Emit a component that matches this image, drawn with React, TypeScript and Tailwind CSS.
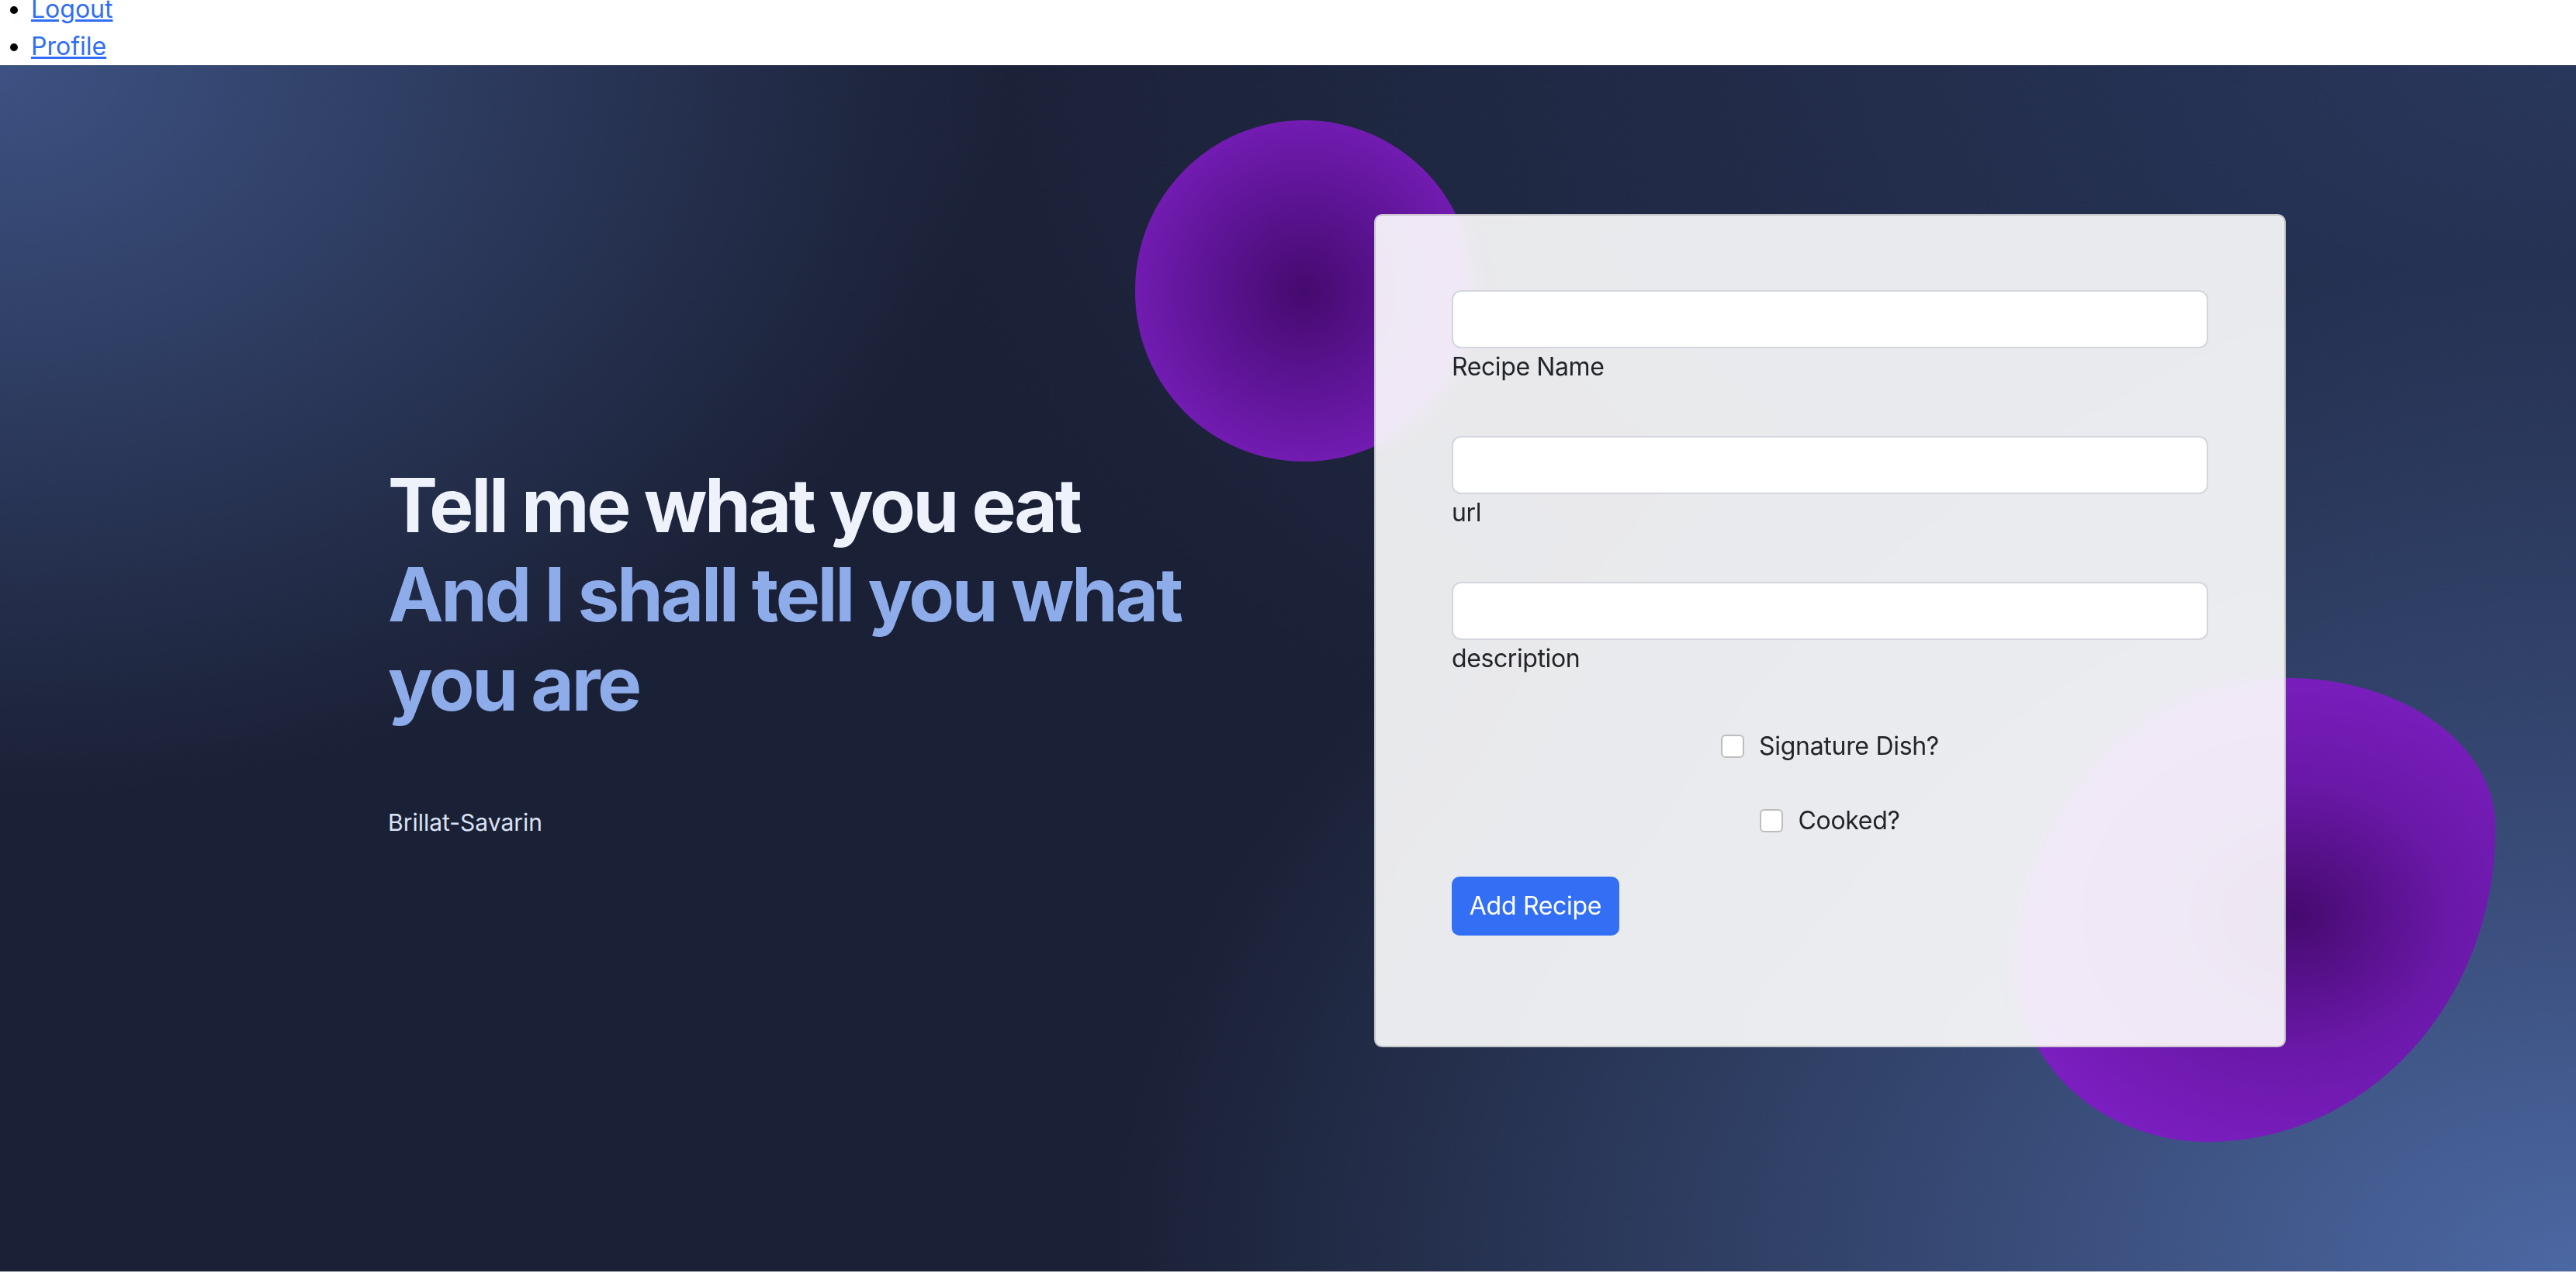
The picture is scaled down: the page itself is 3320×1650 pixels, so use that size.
import { useState } from 'react';

const font = { fontFamily: 'Inter, "Noto Sans", sans-serif' };

function Field({ label }: { label: string }) {
  return (
    <div className="mb-[65px]">
      <input
        type="text"
        className="block h-[75px] w-full rounded-[12px] border-2 border-[#d3d6dc] bg-white px-6 text-[32px] outline-none"
      />
      <label className="block text-[32px] leading-[48px] tracking-[-0.4px] text-[#212529]">{label}</label>
    </div>
  );
}

function Check({ label, checked, onChange }: { label: string; checked: boolean; onChange: () => void }) {
  return (
    <div className="flex h-[48px] items-center justify-center gap-[19px]">
      <input
        type="checkbox"
        checked={checked}
        onChange={onChange}
        className="h-[30px] w-[30px] appearance-none rounded-[6px] border-2 border-[#bdbdbd] bg-white checked:border-[#336ff5] checked:bg-[#336ff5]"
      />
      <label className="text-[32px] leading-[48px] tracking-[-0.3px] text-[#212529]">{label}</label>
    </div>
  );
}

export default function App() {
  const [signature, setSignature] = useState(false);
  const [cooked, setCooked] = useState(false);

  return (
    <div className="min-h-screen bg-white" style={font}>
      <ul className="-mt-[12px] list-disc pl-[40px] text-[32px] leading-[48px]">
        <li>
          <a href="#" className="text-[#2f6ef5] underline">Logout</a>
        </li>
        <li>
          <a href="#" className="text-[#2f6ef5] underline">Profile</a>
        </li>
      </ul>

      <section className="relative flex h-[1555px] items-start overflow-hidden bg-[#1a2035] bg-[image:radial-gradient(ellipse_1300px_950px_at_0%_0%,#3d5283_0%,rgba(61,82,131,0)_100%),radial-gradient(ellipse_1900px_1300px_at_100%_100%,#4c68a3_0%,rgba(76,104,163,0)_100%),radial-gradient(ellipse_2200px_1200px_at_100%_0%,#29375c_0%,rgba(41,55,92,0)_100%)] pl-[500px]">
        {/* blobs behind the card */}
        <div className="absolute left-[1463px] top-[71px] h-[440px] w-[436px] rounded-full bg-[radial-gradient(circle_at_50%_50%,#450a6e_0%,#5a1390_35%,#8522cc_100%)]" />
        <div className="absolute left-[2600px] top-[790px] h-[598px] w-[616px] rounded-[348px_267px_370px_245px/376px_191px_402px_222px] bg-[radial-gradient(ellipse_at_58%_51%,#450a6e_0%,#6a18a8_40%,#8623d0_100%)]" />

        <div className="relative w-[1100px] pt-[510px]">
          <h1 className="text-[96px] font-bold leading-[115px] tracking-[-3.3px]">
            <span className="block text-[#eef2fb]">Tell me what you eat</span>
            <span className="block text-[#8eacea]">And I shall tell you what you are</span>
          </h1>
          <p className="mt-[100px] text-[30px] leading-[42px] text-[#dbe3f6]">Brillat-Savarin</p>
        </div>

        <form
          className="relative ml-[171px] mt-[192px] w-[1175px] rounded-[10px] border-2 border-black/15 bg-white/90 px-[98px] pb-[142px] pt-[96px] backdrop-blur-md"
          onSubmit={(e) => e.preventDefault()}
        >
          <Field label="Recipe Name" />
          <Field label="url" />
          <Field label="description" />
          <div className="mb-[48px]">
            <Check label="Signature Dish?" checked={signature} onChange={() => setSignature(!signature)} />
          </div>
          <div className="mb-[48px]">
            <Check label="Cooked?" checked={cooked} onChange={() => setCooked(!cooked)} />
          </div>
          <button
            type="submit"
            className="h-[76px] w-[216px] rounded-[10px] bg-[#336ff5] text-[32px] tracking-[-0.3px] text-white"
          >
            Add Recipe
          </button>
        </form>
      </section>
    </div>
  );
}
